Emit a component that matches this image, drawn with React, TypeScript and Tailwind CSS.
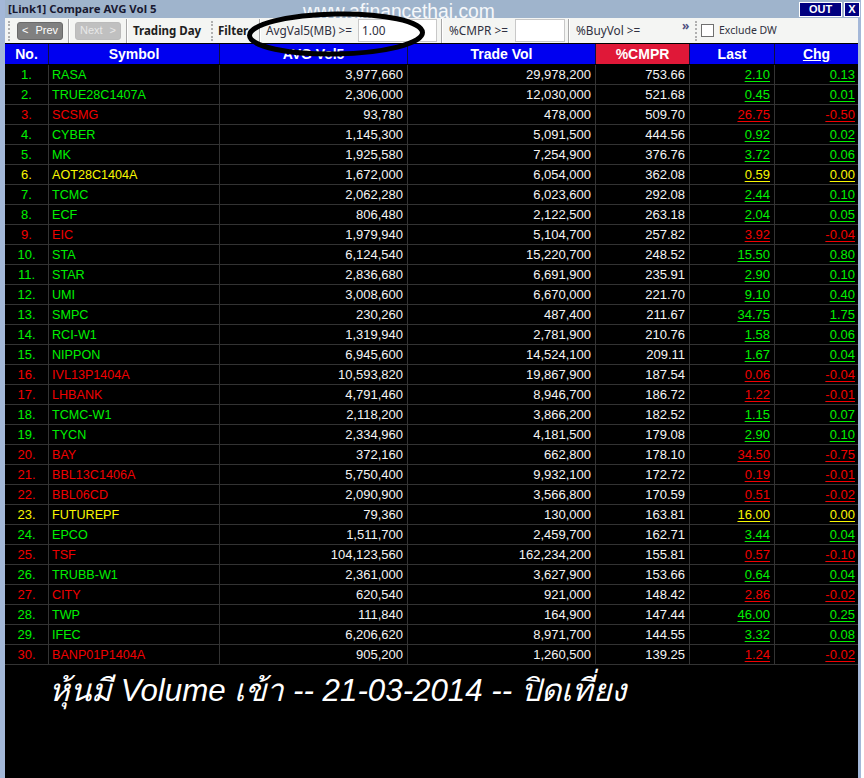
const rows: [string, string, string, string, string, string, string, string][] = [
  ["g","1.","RASA","3,977,660","29,978,200","753.66","2.10","0.13"],
  ["g","2.","TRUE28C1407A","2,306,000","12,030,000","521.68","0.45","0.01"],
  ["r","3.","SCSMG","93,780","478,000","509.70","26.75","-0.50"],
  ["g","4.","CYBER","1,145,300","5,091,500","444.56","0.92","0.02"],
  ["g","5.","MK","1,925,580","7,254,900","376.76","3.72","0.06"],
  ["y","6.","AOT28C1404A","1,672,000","6,054,000","362.08","0.59","0.00"],
  ["g","7.","TCMC","2,062,280","6,023,600","292.08","2.44","0.10"],
  ["g","8.","ECF","806,480","2,122,500","263.18","2.04","0.05"],
  ["r","9.","EIC","1,979,940","5,104,700","257.82","3.92","-0.04"],
  ["g","10.","STA","6,124,540","15,220,700","248.52","15.50","0.80"],
  ["g","11.","STAR","2,836,680","6,691,900","235.91","2.90","0.10"],
  ["g","12.","UMI","3,008,600","6,670,000","221.70","9.10","0.40"],
  ["g","13.","SMPC","230,260","487,400","211.67","34.75","1.75"],
  ["g","14.","RCI-W1","1,319,940","2,781,900","210.76","1.58","0.06"],
  ["g","15.","NIPPON","6,945,600","14,524,100","209.11","1.67","0.04"],
  ["r","16.","IVL13P1404A","10,593,820","19,867,900","187.54","0.06","-0.04"],
  ["r","17.","LHBANK","4,791,460","8,946,700","186.72","1.22","-0.01"],
  ["g","18.","TCMC-W1","2,118,200","3,866,200","182.52","1.15","0.07"],
  ["g","19.","TYCN","2,334,960","4,181,500","179.08","2.90","0.10"],
  ["r","20.","BAY","372,160","662,800","178.10","34.50","-0.75"],
  ["r","21.","BBL13C1406A","5,750,400","9,932,100","172.72","0.19","-0.01"],
  ["r","22.","BBL06CD","2,090,900","3,566,800","170.59","0.51","-0.02"],
  ["y","23.","FUTUREPF","79,360","130,000","163.81","16.00","0.00"],
  ["g","24.","EPCO","1,511,700","2,459,700","162.71","3.44","0.04"],
  ["r","25.","TSF","104,123,560","162,234,200","155.81","0.57","-0.10"],
  ["g","26.","TRUBB-W1","2,361,000","3,627,900","153.66","0.64","0.04"],
  ["r","27.","CITY","620,540","921,000","148.42","2.86","-0.02"],
  ["g","28.","TWP","111,840","164,900","147.44","46.00","0.25"],
  ["g","29.","IFEC","6,206,620","8,971,700","144.55","3.32","0.08"],
  ["r","30.","BANP01P1404A","905,200","1,260,500","139.25","1.24","-0.02"],
];

const tone: Record<string, string> = {
  g: "text-[#00f000]",
  r: "text-[#f00000]",
  y: "text-[#f8f800]",
};

const cols = "grid grid-cols-[44px_171px_188px_188px_94px_85px_83px]";

function Sep() {
  return <div className="h-[24px] w-[2px] shrink-0 border-l border-r border-l-[#a8a8a8] border-r-white" />;
}

function Grip() {
  return <div className="h-[20px] w-[3px] shrink-0 border-l-2 border-dotted border-[#b0b0b0]" />;
}

function HeadCell({ children, last }: { children: React.ReactNode; last?: boolean }) {
  return (
    <div className={`flex h-[20px] items-center justify-center text-[14px] leading-none font-bold text-white ${last ? "" : "border-r border-[#101040]"}`}>
      {children}
    </div>
  );
}

function Num({ children, cls, last }: { children: React.ReactNode; cls?: string; last?: boolean }) {
  return (
    <div className={`flex h-[20px] items-center justify-end border-b border-[#333333] text-[13px] leading-none ${last ? "pr-[3px]" : "border-r pr-[4px]"} ${cls ?? "text-[#f4f4f4]"}`}>
      {children}
    </div>
  );
}

export default function App() {
  return (
    <div className="relative h-[778px] w-[864px] overflow-hidden bg-white font-['Liberation_Sans',sans-serif]">
      <div className="flex h-full w-[861px] flex-col bg-[#a4b8d8] pl-[5px] pr-[3px]">
        <div className="flex h-[18px] shrink-0 items-start justify-between bg-[#9fb4cc] pl-[3px]">
          <div className="pt-[1px] font-['Noto_Sans',sans-serif] text-[11.4px] leading-[15px] font-bold whitespace-nowrap text-[#181830]">
            [Link1] Compare AVG Vol 5
          </div>
          <div className="mr-[-2px] flex gap-[2px] pt-[2px]">
            <div className="flex h-[15px] w-[43px] items-center justify-center border border-white bg-[#000080] text-[11px] leading-none font-bold text-white">
              OUT
            </div>
            <div className="flex h-[15px] w-[16px] items-center justify-center border border-white bg-[#000080] text-[11px] leading-none font-bold text-white">
              X
            </div>
          </div>
        </div>

        <div className="flex h-[25px] shrink-0 items-center bg-[#f4f5f3] font-['Noto_Sans',sans-serif] text-[11.8px] whitespace-nowrap text-[#303040]">
          <div className="ml-[3px]"><Grip /></div>
          <button className="ml-[6px] flex h-[18px] w-[46px] items-center justify-center gap-[7px] rounded-[3px] border border-[#6a6a6a] bg-[#808080] font-['Liberation_Sans',sans-serif] text-[11px] leading-none text-white">
            <span>&lt;</span>
            <span>Prev</span>
          </button>
          <div className="ml-[5px]"><Sep /></div>
          <button className="ml-[5px] flex h-[18px] w-[46px] items-center justify-center gap-[7px] rounded-[3px] border border-[#bbbbbb] bg-[#c0c0c0] font-['Liberation_Sans',sans-serif] text-[11px] leading-none text-[#e8e8e8]">
            <span>Next</span>
            <span>&gt;</span>
          </button>
          <div className="ml-[5px]"><Sep /></div>
          <span className="ml-[5px] w-[68px] text-[11.5px] font-bold text-[#202020]">Trading Day</span>
          <div className="ml-[10px]"><Grip /></div>
          <span className="ml-[4px] w-[28px] text-[11.5px] font-bold text-[#202020]">Filter</span>
          <div className="ml-[13px]"><Sep /></div>
          <span className="ml-[5px] w-[86px]">AvgVal5(MB) &gt;=</span>
          <div className="ml-[6px] flex h-[23px] w-[79px] items-center border border-[#c8c8c8] bg-white pl-[3px]">1.00</div>
          <div className="ml-[4px]"><Sep /></div>
          <span className="ml-[6px] w-[61px]">%CMPR &gt;=</span>
          <div className="ml-[5px] h-[23px] w-[50px] border border-[#c8c8c8] bg-white" />
          <div className="ml-[3px]"><Sep /></div>
          <span className="ml-[6px] w-[64px]">%BuyVol &gt;=</span>
          <span className="mb-[9px] ml-[42px] w-[8px] text-[12px] leading-none font-bold text-[#505080]">»</span>
          <div className="ml-[5px]"><Grip /></div>
          <div className="ml-[3px] h-[13px] w-[13px] border border-[#707070] bg-white" />
          <span className="ml-[5px] text-[10.5px]">Exclude DW</span>
        </div>

        <div className="min-h-0 flex-1 bg-black pt-[1px]">
          <div className={`${cols} bg-[#0000f0]`}>
            <HeadCell>No.</HeadCell>
            <HeadCell>Symbol</HeadCell>
            <HeadCell>AVG Vol5</HeadCell>
            <HeadCell>Trade Vol</HeadCell>
            <div className="flex h-[20px] items-center justify-center border-r border-[#101040] bg-[#e01838] text-[14px] leading-none font-bold text-white">%CMPR</div>
            <HeadCell>Last</HeadCell>
            <HeadCell last><span className="underline">Chg</span></HeadCell>
          </div>
          <div className="pt-[1px]">
            {rows.map((r) => (
              <div key={r[1]} className={cols}>
                <div className={`flex h-[20px] items-center justify-center border-r border-b border-[#333333] text-[13px] leading-none ${tone[r[0]]}`}>{r[1]}</div>
                <div className={`flex h-[20px] items-center border-r border-b border-[#333333] pl-[3px] pt-[1px] text-[12.6px] leading-none ${tone[r[0]]}`}>{r[2]}</div>
                <Num>{r[3]}</Num>
                <Num>{r[4]}</Num>
                <Num>{r[5]}</Num>
                <Num cls={tone[r[0]]}><span className="underline underline-offset-2">{r[6]}</span></Num>
                <Num cls={tone[r[0]]} last><span className="underline underline-offset-2">{r[7]}</span></Num>
              </div>
            ))}
          </div>
          <div className="pl-[44px] pt-[6px] text-[31.3px] leading-[40px] text-white italic">
            หุ้นมี Volume เข้า -- 21-03-2014 -- ปิดเที่ยง
          </div>
        </div>
      </div>

      <div className="absolute left-[303px] top-[1px] text-[19.3px] leading-[22px] text-white/90">www.afinancethai.com</div>
      <svg className="absolute left-[245px] top-[8px]" width="185" height="52" viewBox="0 0 185 52" fill="none">
        <ellipse cx="91" cy="26" rx="86.5" ry="20" stroke="#000" strokeWidth="5" transform="rotate(-1 91 26)" />
      </svg>
    </div>
  );
}
